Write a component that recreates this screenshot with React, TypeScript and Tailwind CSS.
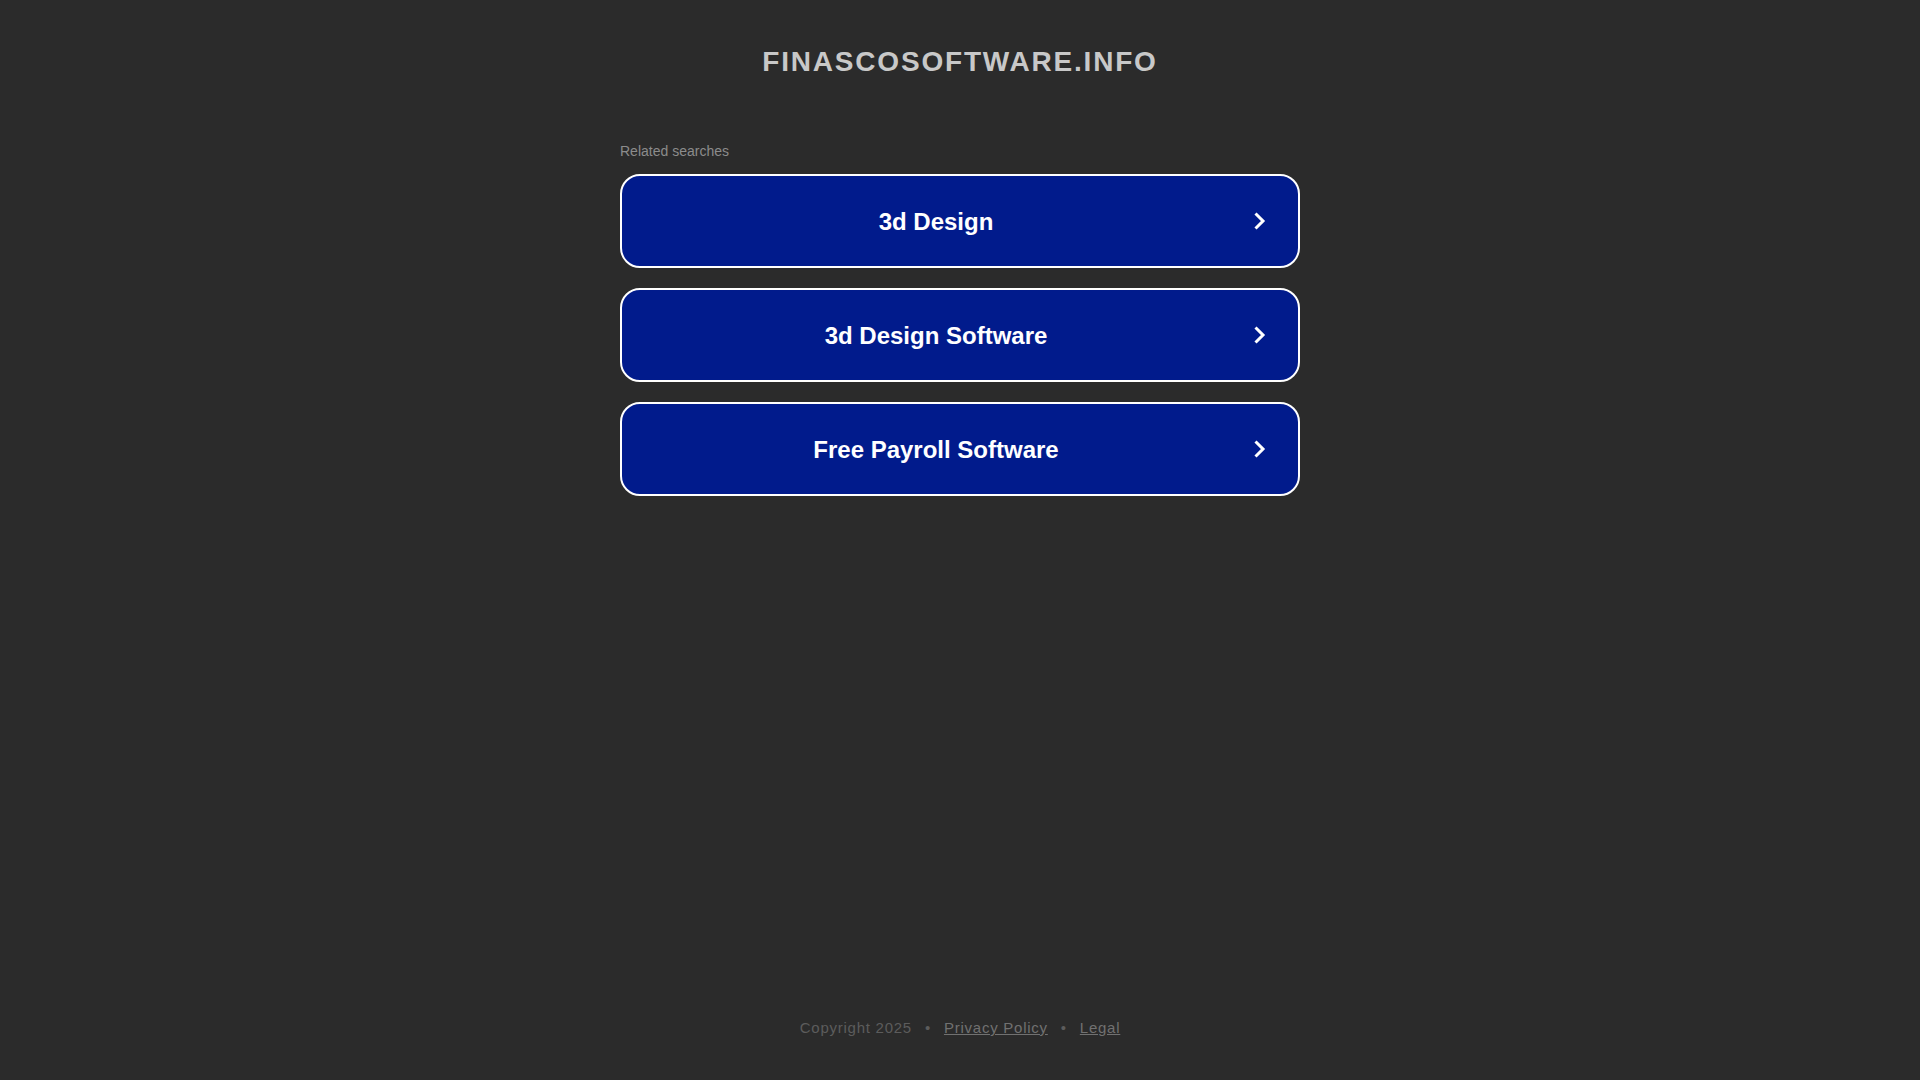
import React from "react";

const items = ["3d Design", "3d Design Software", "Free Payroll Software"];

function Chevron() {
  return (
    <svg width="20" height="20" viewBox="0 0 20 20" className="shrink-0 ml-[28px]">
      <path d="M5.5 2.5 L13 10 L5.5 17.5" fill="none" stroke="white" strokeWidth="3" strokeLinejoin="miter" strokeLinecap="butt" />
    </svg>
  );
}

export default function App() {
  return (
    <div className="min-h-screen bg-[#2b2b2b] flex flex-col items-center font-['Liberation_Sans',Arial,sans-serif]">
      <h1 className="mt-[46px] text-[28px] leading-[32px] font-bold tracking-[1.8px] text-[#c8c8c8]">
        FINASCOSOFTWARE.INFO
      </h1>
      <div className="w-[680px] mt-[65px] flex flex-col">
        <div className="text-[14px] leading-[16px] text-[#8c8c8c]">Related searches</div>
        <div className="mt-[15px] flex flex-col gap-[20px]">
          {items.map((t) => (
            <a
              key={t}
              href="#"
              className="h-[94px] flex items-center px-[28px] rounded-[20px] border-2 border-white bg-[#011b8c] text-white"
            >
              <span className="flex-1 text-center text-[24px] leading-[28px] font-bold pt-[2px]">{t}</span>
              <Chevron />
            </a>
          ))}
        </div>
      </div>
      <div className="flex-1" />
      <div className="mb-[43px] text-[15px] leading-[18px] tracking-[0.75px] text-[#5c5c5c] flex items-center">
        <span>Copyright 2025</span>
        <span className="mx-[13px] text-[#5c5c5c]">•</span>
        <a href="#" className="underline text-[#717171]">Privacy Policy</a>
        <span className="mx-[13px] text-[#5c5c5c]">•</span>
        <a href="#" className="underline text-[#717171]">Legal</a>
      </div>
    </div>
  );
}
